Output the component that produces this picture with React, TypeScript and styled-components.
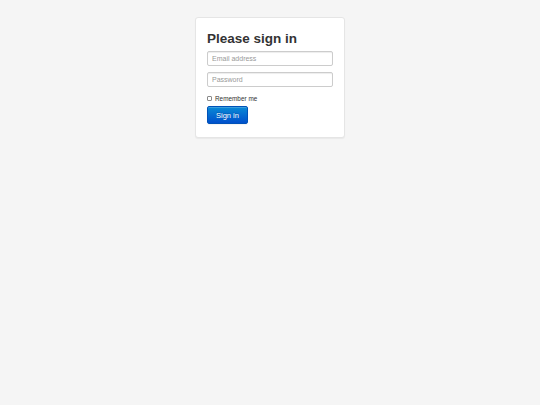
import React from "react";
import styled, { createGlobalStyle } from "styled-components";

const GlobalStyle = createGlobalStyle`
  html, body {
    margin: 0;
    padding: 0;
    background: #f5f5f5;
    font-family: "Liberation Sans", Arial, sans-serif;
    color: #333;
  }
`;

const Page = styled.div`
  min-height: 405px;
  padding-top: 17px;
  box-sizing: border-box;
`;

const Card = styled.form`
  width: 150px;
  margin: 0 auto;
  box-sizing: border-box;
  padding: 13px 11px 13px;
  background: #fff;
  border: 1px solid #e5e5e5;
  border-radius: 3px;
  box-shadow: 0 1px 1px rgba(0, 0, 0, 0.05);
  display: flex;
  flex-direction: column;
`;

const Heading = styled.h2`
  margin: 0 0 4px;
  font-size: 13.5px;
  line-height: 16px;
  font-weight: bold;
  color: #333;
`;

const Field = styled.input`
  box-sizing: border-box;
  height: 15px;
  width: 100%;
  margin: 0 0 6px;
  padding: 0 4px;
  font-family: "Liberation Sans", Arial, sans-serif;
  font-size: 7px;
  color: #555;
  background: #fff;
  border: 1px solid #ccc;
  border-radius: 2px;
  box-shadow: inset 0 1px 1px rgba(0, 0, 0, 0.075);
  outline: none;

  &::placeholder {
    color: #999;
  }
`;

const CheckRow = styled.label`
  display: flex;
  align-items: center;
  gap: 3px;
  height: 10px;
  margin: 0 0 3px;
  font-size: 6.4px;
  color: #333;
`;

const Check = styled.input`
  appearance: none;
  margin: 0;
  width: 5px;
  height: 5px;
  border: 1px solid #8a8a8a;
  border-radius: 1px;
  background: #fff;
  box-sizing: border-box;
`;

const Button = styled.button`
  align-self: flex-start;
  height: 18px;
  padding: 0 8px;
  font-family: "Liberation Sans", Arial, sans-serif;
  font-size: 7.5px;
  color: #fff;
  border: 1px solid #0052b8;
  border-radius: 2px;
  background: linear-gradient(to bottom, #0a8ad6, #0050cc);
  text-shadow: 0 -1px 0 rgba(0, 0, 0, 0.2);
  box-shadow: inset 0 1px 0 rgba(255, 255, 255, 0.2), 0 1px 1px rgba(0, 0, 0, 0.05);
  cursor: pointer;
`;

export default function App() {
  return (
    <Page>
      <GlobalStyle />
      <Card onSubmit={(e) => e.preventDefault()}>
        <Heading>Please sign in</Heading>
        <Field type="text" placeholder="Email address" />
        <Field type="password" placeholder="Password" />
        <CheckRow>
          <Check type="checkbox" value="remember-me" />
          Remember me
        </CheckRow>
        <Button type="submit">Sign in</Button>
      </Card>
    </Page>
  );
}
